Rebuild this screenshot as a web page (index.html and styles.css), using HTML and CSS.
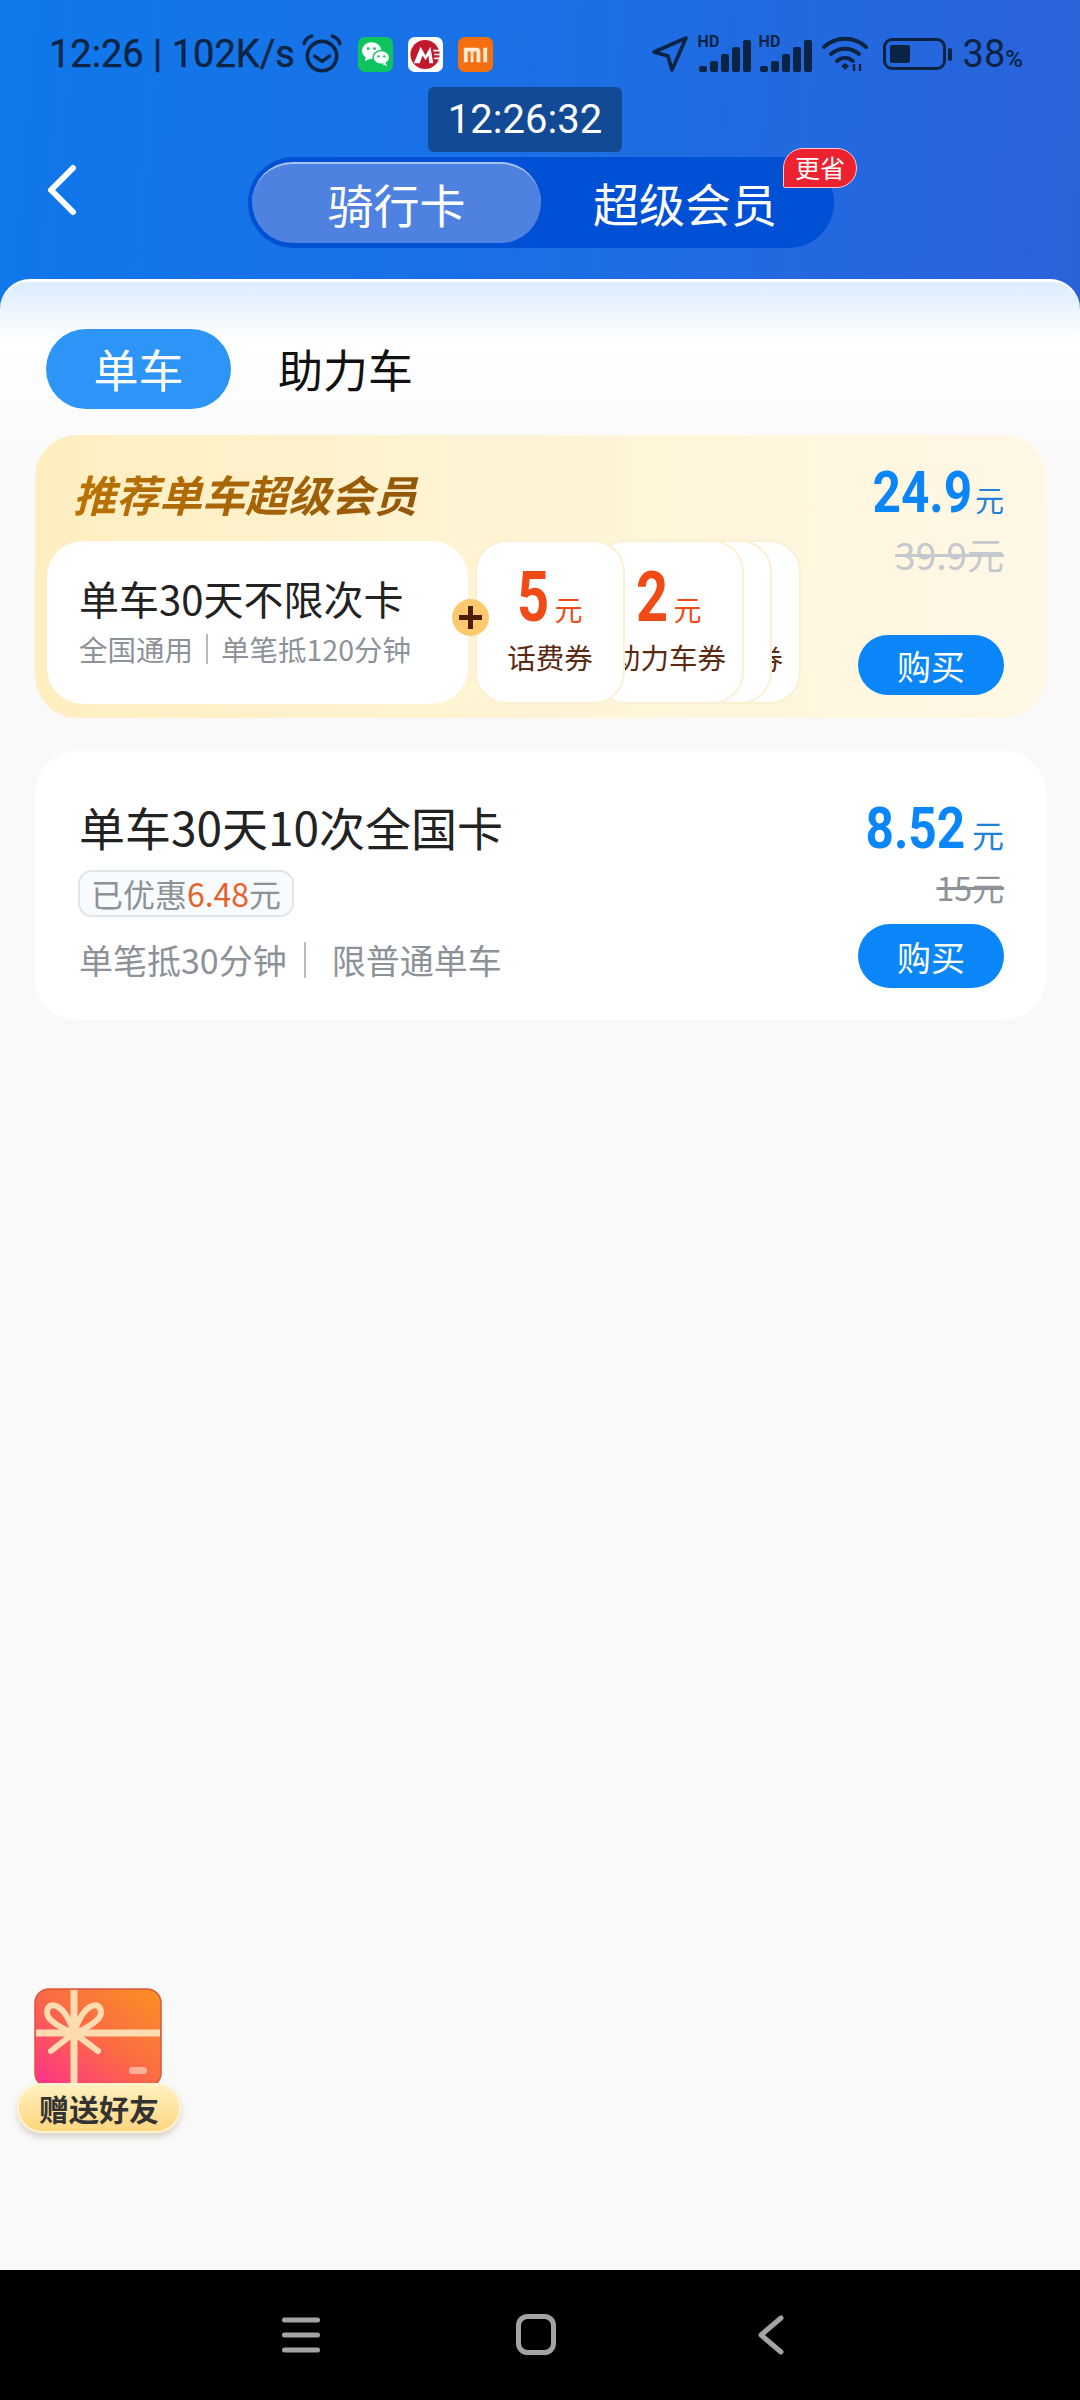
FILE: index.html
```html
<!DOCTYPE html>
<html lang="zh">
<head>
<meta charset="utf-8">
<title>骑行卡</title>
<link rel="stylesheet" href="styles.css">
</head>
<body>
<div class="app">
  <header class="header">
    <div class="status">
      <div class="status-left">
        <span class="status-text">12:26 | 102K/s</span>
        <svg class="ic-alarm" viewBox="0 0 40 40"><g fill="none" stroke="#0b2444" stroke-width="3.4" stroke-linecap="round" stroke-linejoin="round"><circle cx="20" cy="22" r="14"/><path d="M13 22l7 5 7-5"/><path d="M3 10c1-4 4-6 7-7M37 10c-1-4-4-6-7-7"/></g></svg>
        <svg class="ic-app" viewBox="0 0 36 36"><rect width="36" height="36" rx="7" fill="#0ec45e"/><ellipse cx="14" cy="14" rx="10" ry="8.5" fill="#fff"/><path d="M8 20l-1 5 6-3z" fill="#fff"/><ellipse cx="24" cy="21" rx="8.5" ry="7" fill="#fff" stroke="#0ec45e" stroke-width="1.4"/><path d="M28 26l2 4-5-2z" fill="#fff"/><circle cx="10.500" cy="12" r="1.400" fill="#0ec45e"/><circle cx="17" cy="12" r="1.400" fill="#0ec45e"/><circle cx="21" cy="20" r="1.200" fill="#0ec45e"/><circle cx="27" cy="20" r="1.200" fill="#0ec45e"/></svg>
        <svg class="ic-app" viewBox="0 0 36 36"><rect width="36" height="36" rx="7" fill="#fff"/><circle cx="17.500" cy="18" r="15" fill="#c2182e"/><path d="M6 27l7-17 5 9 5-9 3 17h-4l-1-8-3 5-3-5-3 8z" fill="#fff"/><path d="M26 14h6M27 18h6M27 22h5" stroke="#fff" stroke-width="1.600"/></svg>
        <svg class="ic-app" viewBox="0 0 36 36"><rect width="36" height="36" rx="7" fill="#f4700f"/><path d="M6 11h13a4 4 0 0 1 4 4v11h-4V15h-3v11h-3V15h-3v11H6zM26 11h4v15h-4z" fill="#ffe9d2"/></svg>
      </div>
      <div class="status-right">
        <svg class="ic-loc" viewBox="0 0 38 38"><path d="M35 3L3 17l14 4 4 14z" fill="none" stroke="#0b2444" stroke-width="3.600" stroke-linejoin="round"/></svg>
        <div class="signal"><span class="hd">HD</span><i class="b1"></i><i class="b2"></i><i class="b3"></i><i class="b4"></i><i class="b5"></i></div>
        <div class="signal"><span class="hd">HD</span><i class="b1"></i><i class="b2"></i><i class="b3"></i><i class="b4"></i><i class="b5"></i></div>
        <svg class="ic-wifi" viewBox="0 0 48 36"><g fill="none" stroke="#0b2444" stroke-width="4" stroke-linecap="round"><path d="M3 11c12-11 30-11 42 0"/><path d="M10 18c8-7 20-7 28 0"/><path d="M16 25c5-4 11-4 16 0" /></g><path d="M20 30l4-3 4 3-4 4z" fill="#0b2444"/><path d="M33 28v7M39 28v7" stroke="#0b2444" stroke-width="2.400"/></svg>
        <div class="battery"><div class="battery-body"><div class="battery-fill"></div></div><div class="battery-cap"></div></div>
        <span class="percent">38<small>%</small></span>
      </div>
    </div>
    <div class="clock-row"><span class="clock">12:26:32</span></div>
    <div class="nav-row">
      <svg class="back" viewBox="0 0 32 54"><path d="M27 5L5 27l22 22" fill="none" stroke="#fff" stroke-width="6" stroke-linecap="round" stroke-linejoin="round"/></svg>
      <div class="segment">
        <span class="seg-item seg-active">骑行卡</span>
        <span class="seg-item seg-plain">超级会员</span>
        <span class="badge">更省</span>
      </div>
    </div>
  </header>

  <main class="panel">
    <div class="tabs">
      <span class="tab tab-active">单车</span>
      <span class="tab">助力车</span>
    </div>

    <section class="card card-gold">
      <div class="gold-left">
        <h2 class="gold-title">推荐单车超级会员</h2>
        <div class="bundle">
          <div class="main-ticket">
            <div class="ticket-name">单车30天不限次卡</div>
            <div class="ticket-sub"><span>全国通用</span><i class="vr"></i><span>单笔抵120分钟</span></div>
            <span class="plus"></span>
          </div>
          <div class="coupons">
            <div class="coupon c1"><div class="coupon-val"><b>5</b><span>元</span></div><div class="coupon-name">话费券</div></div>
            <div class="coupon c2"><div class="coupon-val"><b>2</b><span>元</span></div><div class="coupon-name">助力车券</div></div>
            <div class="coupon c3"></div>
            <div class="coupon c4"><div class="coupon-name">券</div></div>
          </div>
        </div>
      </div>
      <div class="price-col">
        <div class="price"><b>24.9</b><span>元</span></div>
        <div class="old-price old-light">39.9元</div>
        <button class="buy buy-gold">购买</button>
      </div>
    </section>

    <section class="card card-plain">
      <div class="plain-left">
        <h2 class="plain-title">单车30天10次全国卡</h2>
        <div class="chip">已优惠<em>6.48</em>元</div>
        <div class="plain-sub"><span>单笔抵30分钟</span><i class="vr vr-tall"></i><span>限普通单车</span></div>
      </div>
      <div class="price-col price-col-plain">
        <div class="price"><b>8.52</b><span class="yuan-lg">元</span></div>
        <div class="old-price old-dark">15元</div>
        <button class="buy buy-plain">购买</button>
      </div>
    </section>

    <div class="gift">
      <svg class="gift-card" viewBox="0 0 128 100">
        <defs><linearGradient id="gg" x1="0" y1="1" x2="1" y2="0"><stop offset="0" stop-color="#ff2f8e"/><stop offset=".5" stop-color="#fb6a45"/><stop offset="1" stop-color="#fb9122"/></linearGradient></defs>
        <rect x="1" y="1" width="126" height="98" rx="14" fill="url(#gg)" stroke="#d9573c" stroke-width="1.500"/>
        <g fill="none" stroke="#ffdcb0" stroke-linecap="round"><path d="M40 2v96M2 45h124" stroke-width="7" stroke-linecap="butt"/><path d="M40 45C30 42 12 32 13 24 14 12 30 14 40 45 50 14 66 12 67 24 68 32 50 42 40 45M40 45L17 63M40 45l24 18" stroke-width="6"/></g>
        <rect x="95" y="79" width="18" height="7" rx="3.500" fill="#ffb09a"/>
      </svg>
      <div class="gift-label">赠送好友</div>
    </div>
  </main>

  <footer class="sysnav">
    <svg class="sys-menu" viewBox="0 0 38 36"><path d="M2.500 3h33M2.500 18h33M2.500 33h33" stroke="#a3a3a3" stroke-width="5" stroke-linecap="round"/></svg>
    <svg class="sys-home" viewBox="0 0 40 41"><rect x="2.500" y="2.500" width="35" height="36" rx="9" fill="none" stroke="#a3a3a3" stroke-width="5"/></svg>
    <svg class="sys-back" viewBox="0 0 26 40"><path d="M23 3L3 20l20 17" fill="none" stroke="#a3a3a3" stroke-width="5" stroke-linecap="round" stroke-linejoin="round"/></svg>
  </footer>
</div>
</body>
</html>
```

FILE: styles.css
```css
* { box-sizing: border-box; }
html, body { margin: 0; padding: 0; }
body { width: 1080px; height: 2400px; overflow: hidden; font-family: "Noto Sans CJK SC", "Noto Sans", sans-serif; }
.app { width: 1080px; height: 2400px; display: flex; flex-direction: column; background: linear-gradient(95deg, #0f78ea 0%, #1a70e6 45%, #2b62da 100%) top/100% 340px no-repeat; }

.header { height: 279px; flex: none; padding-top: 34px; }
.status { height: 40px; display: flex; justify-content: space-between; align-items: center; padding: 0 57px 0 49px; color: #0b2444; }
.status-left, .status-right { display: flex; align-items: center; }
.status-text { font: 400 38px "Roboto", sans-serif; width: 250px; white-space: nowrap; line-height: 40px; -webkit-text-stroke: .4px #0b2444; }
.ic-alarm { width: 42px; height: 42px; margin-left: 2px; }
.ic-app { width: 35px; height: 35px; margin-left: 15px; }
.ic-app + .ic-app { margin-left: 15px; }
.status-right { gap: 9px; }
.ic-loc { width: 38px; height: 38px; margin-right: 1px; }
.signal { position: relative; width: 52px; height: 36px; display: flex; align-items: flex-end; gap: 3px; }
.signal i { display: block; width: 8px; background: #0b2444; border-radius: 2px; }
.signal .b1 { height: 6px; } .signal .b2 { height: 11px; } .signal .b3 { height: 18px; } .signal .b4 { height: 25px; } .signal .b5 { height: 32px; }
.hd { position: absolute; left: -1px; top: -2px; font: 700 16px/15px "Roboto", sans-serif; color: #0b2444; }
.ic-wifi { width: 48px; height: 36px; }
.battery { display: flex; align-items: center; margin-left: 5px; }
.battery-body { width: 63px; height: 32px; border: 3px solid #0b2444; border-radius: 9px; padding: 4px; }
.battery-fill { width: 20px; height: 100%; background: #0b2444; border-radius: 2px; }
.battery-cap { width: 4px; height: 13px; margin-left: 2px; background: #0b2444; border-radius: 2px; }
.percent { font: 400 38px/40px "Roboto", sans-serif; margin-left: 2px; padding-top: 5px; white-space: nowrap; }
.percent small { font-size: 24px; font-weight: 500; }

.clock-row { display: flex; justify-content: center; margin-top: 13px; }
.clock { width: 194px; height: 65px; background: #124a96; border-radius: 6px; color: #fff; text-align: center; font: 400 40px/65px "Roboto", sans-serif; margin-right: 30px; }

.nav-row { position: relative; height: 91px; margin-top: 5px; display: flex; justify-content: center; }
.back { position: absolute; left: 46px; top: 6px; width: 32px; height: 54px; }
.segment { position: relative; width: 586px; height: 91px; margin-left: 2px; background: #0050d5; border-radius: 46px; padding: 4px; display: flex; align-items: center; }
.seg-item { color: #fff; font-size: 46px; text-align: center; }
.seg-active { width: 289px; height: 81px; line-height: 78px; background: #4f82e0; border-radius: 41px; border-top: 2px solid #a9c2f0; }
.seg-plain { width: 288px; line-height: 81px; }
.badge { position: absolute; right: -23px; top: -9px; width: 74px; height: 40px; background: #ec2230; border: 1.500px solid #ffc7cf; border-radius: 20px 20px 20px 2px; color: #fff; font-size: 25px; line-height: 36px; text-align: center; }

.panel { position: relative; flex: 1; border-radius: 30px 30px 0 0; border-top: 3px solid #fff; background: linear-gradient(#dcecff 0, #fff 60px, #fbfbfc 140px, #f9f9f9 240px); padding: 47px 34px 0 35px; }
.tabs { display: flex; align-items: center; height: 80px; padding-left: 11px; }
.tab { font-size: 45px; color: #111; line-height: 80px; margin-left: 47px; }
.tab-active { width: 185px; height: 80px; margin-left: 0; background: #2e95f8; color: #fff; border-radius: 40px; text-align: center; }

.card { display: flex; justify-content: space-between; border-radius: 42px; }
.card-gold { height: 283px; margin-top: 26px; background: linear-gradient(90deg, #ffeec0 0%, #fff3d2 40%, #fff8e6 100%); padding: 0 42px 0 12px; }
.gold-title { margin: 0 0 0 26px; padding-top: 33px; height: 106px; font-size: 43px; line-height: 50px; font-weight: 700; font-style: italic; white-space: nowrap; width: 346px; background: linear-gradient(90deg, #bb7203, #93570a); -webkit-background-clip: text; background-clip: text; color: transparent; }
.bundle { display: flex; position: relative; }
.main-ticket { position: relative; width: 421px; height: 163px; background: #fff; border-radius: 36px; padding: 32px 0 0 32px; z-index: 6; }
.ticket-name { font-size: 40px; line-height: 50px; color: #222; white-space: nowrap; }
.ticket-sub { display: flex; align-items: center; font-size: 28.500px; line-height: 42px; color: #8d9299; white-space: nowrap; margin-top: 5px; }
.vr { display: block; width: 2px; height: 30px; background: #b8bcc2; margin: 0 13px; }
.plus { position: absolute; right: -21px; top: 58px; width: 37px; height: 37px; border-radius: 50%; background: linear-gradient(#4a2000, #4a2000) center/23px 5px no-repeat, linear-gradient(#4a2000, #4a2000) center/5px 23px no-repeat, #fcc96f; }
.coupons { display: flex; margin-left: 7px; margin-top: -1px; }
.coupon { width: 150px; height: 164px; flex: none; background: #fff; border: 2px solid #fcf0d4; border-radius: 32px; text-align: center; padding-top: 20px; overflow: hidden; }
.c1 { z-index: 5; position: relative; }
.c2 { margin-left: -31px; z-index: 4; position: relative; }
.c3 { margin-left: -122px; z-index: 3; position: relative; }
.c4 { margin-left: -121px; z-index: 2; position: relative; padding-top: 96px; }
.coupon-val { height: 74px; display: flex; justify-content: center; align-items: baseline; color: #f04a17; }
.coupon-val b { display: inline-block; font: 700 70px/70px "Roboto", sans-serif; transform: scaleX(.8); margin: 0 -4px; }
.coupon-val span { font-size: 28px; line-height: 30px; margin-left: 5px; }
.coupon-name { font-size: 28.500px; line-height: 40px; color: #5b2a12; margin-top: 1px; white-space: nowrap; }
.c4 .coupon-name { text-align: right; padding-right: 16px; margin-top: 0; }

.price-col { display: flex; flex-direction: column; align-items: flex-end; width: 200px; flex: none; }
.price { display: flex; align-items: baseline; color: #0a86f9; margin-top: 23px; height: 70px; }
.price b { display: inline-block; font: 700 57px/70px "Roboto", sans-serif; transform: scaleX(.87); margin: 0 -7px; }
.price span { font-size: 29px; line-height: 30px; color: #1f82d8; margin-left: 2px; }
.old-price { text-decoration: line-through; white-space: nowrap; }
.old-light { font: 400 37px/44px "Noto Sans CJK SC", sans-serif; color: #c5c8cd; margin-top: 4px; }
.buy { border: 0; padding: 0; width: 146px; background: #0a86f9; color: #fff; font-family: inherit; font-size: 34px; text-align: center; }
.buy-gold { height: 60px; border-radius: 30px; margin-top: 59px; }

.card-plain { height: 269px; margin-top: 33px; background: #fff; padding: 0 42px 0 44px; }
.plain-title { margin: 0; padding-top: 45px; font-size: 46px; line-height: 60px; font-weight: 400; color: #222; white-space: nowrap; }
.chip { width: 216px; height: 47px; margin-top: 14px; margin-left: -1px; border: 2px solid #e0e5ea; border-radius: 14px; background: #f8fbfd; font-size: 32px; line-height: 43px; color: #8d9299; text-align: center; white-space: nowrap; }
.chip em { font-style: normal; color: #e8612c; }
.plain-sub { display: flex; align-items: center; font-size: 34px; line-height: 50px; color: #8d9299; margin-top: 18px; white-space: nowrap; }
.vr-tall { height: 36px; margin: 0 26px 0 17px; }
.price-col-plain .price { margin-top: 43px; }
.yuan-lg { font-size: 32px !important; margin-left: 6px !important; }
.old-dark { font: 400 32px/44px "Noto Sans CJK SC", sans-serif; color: #8d9299; margin-top: 1px; }
.buy-plain { height: 64px; border-radius: 32px; margin-top: 15px; }

.gift { position: absolute; left: 17px; top: 1706px; width: 164px; }
.gift-card { display: block; width: 128px; height: 100px; margin-left: 17px; }
.gift-label { width: 164px; height: 50px; margin-top: -5px; position: relative; background: linear-gradient(#fff0bf, #ffd67f); border: 2px solid #fff3cf; border-radius: 25px; box-shadow: 0 4px 6px rgba(120,100,60,.25); font-size: 30px; line-height: 46px; font-weight: 700; color: #333; text-align: center; }

.sysnav { position: relative; flex: none; height: 130px; background: #000; }
.sys-menu { position: absolute; left: 282px; top: 47px; width: 38px; height: 36px; }
.sys-home { position: absolute; left: 516px; top: 44px; width: 40px; height: 41px; }
.sys-back { position: absolute; left: 758px; top: 45px; width: 26px; height: 40px; }
```
